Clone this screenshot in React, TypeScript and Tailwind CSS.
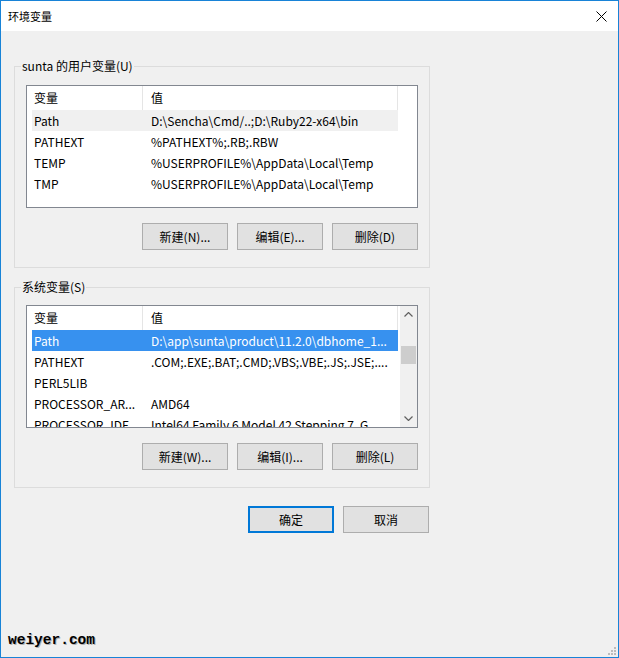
import React from "react";
import clsx from "clsx";

type Row = [string, string];

const userVars: Row[] = [
  ["Path", "D:\\Sencha\\Cmd/..;D:\\Ruby22-x64\\bin"],
  ["PATHEXT", "%PATHEXT%;.RB;.RBW"],
  ["TEMP", "%USERPROFILE%\\AppData\\Local\\Temp"],
  ["TMP", "%USERPROFILE%\\AppData\\Local\\Temp"],
];

const sysVars: Row[] = [
  ["Path", "D:\\app\\sunta\\product\\11.2.0\\dbhome_1..."],
  ["PATHEXT", ".COM;.EXE;.BAT;.CMD;.VBS;.VBE;.JS;.JSE;...."],
  ["PERL5LIB", ""],
  ["PROCESSOR_AR...", "AMD64"],
  ["PROCESSOR_IDE...", "Intel64 Family 6 Model 42 Stepping 7, G..."],
];

const Chevron = ({ down }: { down?: boolean }) => (
  <svg width="9" height="5" viewBox="0 0 9 5">
    <polyline
      points={down ? "0.5,0.5 4.5,4.5 8.5,0.5" : "0.5,4.5 4.5,0.5 8.5,4.5"}
      fill="none"
      stroke="#606060"
      strokeWidth="1.2"
    />
  </svg>
);

const ScrollBar = () => (
  <div className="w-[17px] shrink-0 bg-[#f0f0f0] flex flex-col">
    <div className="h-[17px] flex items-center justify-center">
      <Chevron />
    </div>
    <div className="flex-1">
      <div className="mt-[23px] mx-[1px] h-[18px] bg-[#cdcdcd]" />
    </div>
    <div className="h-[17px] flex items-center justify-center">
      <Chevron down />
    </div>
  </div>
);

interface ListViewProps {
  rows: Row[];
  active: number;
  focused?: boolean;
  scroll?: boolean;
}

const ListView: React.FC<ListViewProps> = ({ rows, active, focused, scroll }) => (
  <div className="w-[392px] h-[123px] border border-[#828790] bg-white flex overflow-hidden">
    <div className="flex-1 flex flex-col overflow-hidden">
      <div className="flex h-[24px] shrink-0">
        <div className="w-[116px] pl-[7px] border-r border-[#e5e5e5] flex items-center">变量</div>
        <div className="w-[255px] pl-[8px] border-r border-[#e5e5e5] flex items-center">值</div>
      </div>
      {rows.map(([name, value], i) => (
        <div
          key={name}
          className={clsx(
            "ml-[5px] w-[366px] h-[21px] shrink-0 flex items-center",
            i === active && (focused ? "bg-[#3791ef] text-white" : "bg-[#f0f0f0]")
          )}
        >
          <div className="w-[111px] pl-[2px] whitespace-nowrap overflow-hidden">{name}</div>
          <div className="flex-1 pl-[8px] whitespace-nowrap overflow-hidden">{value}</div>
        </div>
      ))}
    </div>
    {scroll && <ScrollBar />}
  </div>
);

const Btn = ({ label, primary }: { label: string; primary?: boolean }) => (
  <button
    className={clsx(
      "w-[86px] h-[27px] bg-[#e1e1e1] flex items-center justify-center",
      primary ? "border-2 border-[#0078d7]" : "border border-[#adadad]"
    )}
  >
    {label}
  </button>
);

export default function App() {
  return (
    <div className="w-[619px] h-[658px] border border-[#1883d7] bg-[#f0f0f0] relative overflow-hidden text-[12px] leading-[16px] text-black font-['Noto_Sans_CJK_SC',sans-serif]">
      <div className="h-[30px] bg-white flex items-center justify-between pl-[7px] pr-[11px]">
        <span className="text-[11px]">环境变量</span>
        <svg width="11" height="11" viewBox="0 0 11 11">
          <path d="M0.5 0.5 L10.5 10.5 M10.5 0.5 L0.5 10.5" stroke="#000" strokeWidth="1" />
        </svg>
      </div>

      <div className="pl-[13px] pt-[27px] flex flex-col">
        <fieldset className="w-[416px] border border-[#dcdcdc] m-0 p-0 min-w-0">
          <legend className="ml-[6px] px-[1px]">sunta 的用户变量(U)</legend>
          <div className="pl-[11px] pt-[11px] pb-[17px]">
            <ListView rows={userVars} active={0} />
            <div className="mt-[15px] w-[392px] flex justify-end gap-[9px]">
              <Btn label="新建(N)..." />
              <Btn label="编辑(E)..." />
              <Btn label="删除(D)" />
            </div>
          </div>
        </fieldset>

        <fieldset className="mt-[11px] w-[416px] border border-[#dcdcdc] m-0 p-0 min-w-0">
          <legend className="ml-[6px] px-[1px]">系统变量(S)</legend>
          <div className="pl-[11px] pt-[10px] pb-[17px]">
            <ListView rows={sysVars} active={0} focused scroll />
            <div className="mt-[15px] w-[392px] flex justify-end gap-[9px]">
              <Btn label="新建(W)..." />
              <Btn label="编辑(I)..." />
              <Btn label="删除(L)" />
            </div>
          </div>
        </fieldset>

        <div className="mt-[18px] w-[416px] pr-[1px] flex justify-end gap-[9px]">
          <Btn label="确定" primary />
          <Btn label="取消" />
        </div>
      </div>

      <div className="absolute left-[7px] bottom-[9px] font-['Liberation_Mono',monospace] font-bold text-[14.5px] leading-[16px] [text-shadow:1px_1px_0_#b0b0b0]">
        weiyer.com
      </div>

      <svg className="absolute right-[2px] bottom-[2px]" width="8" height="8" viewBox="0 0 8 8">
        <rect x="6" y="0" width="2" height="2" fill="#bcbcbc" />
        <rect x="3" y="3" width="2" height="2" fill="#bcbcbc" />
        <rect x="6" y="3" width="2" height="2" fill="#bcbcbc" />
        <rect x="0" y="6" width="2" height="2" fill="#bcbcbc" />
        <rect x="3" y="6" width="2" height="2" fill="#bcbcbc" />
        <rect x="6" y="6" width="2" height="2" fill="#bcbcbc" />
      </svg>
    </div>
  );
}
